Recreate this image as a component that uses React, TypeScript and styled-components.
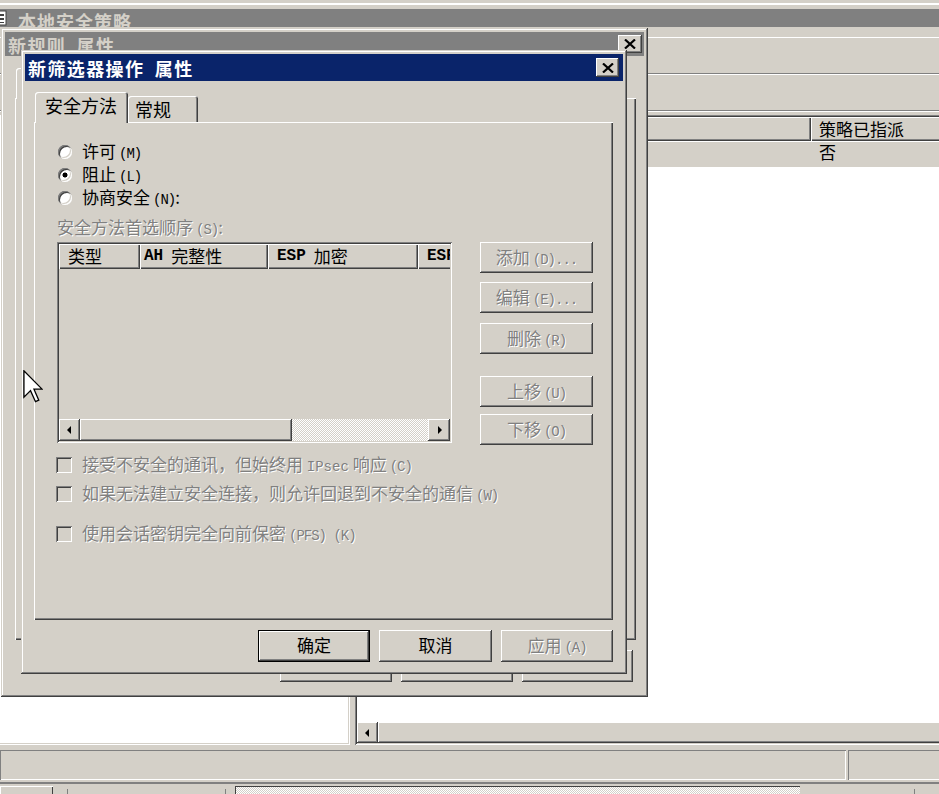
import React from 'react';
import styled, { createGlobalStyle, css } from 'styled-components';

const FACE = '#d4d0c8';
const SHADOW = '#808080';
const DARK = '#404040';
const LIGHT = '#ffffff';
const NAVY = '#0a246a';

const Global = createGlobalStyle`
  html, body { margin: 0; padding: 0; background: ${FACE}; }
  body { width: 939px; height: 794px; overflow: hidden; }
  * { box-sizing: border-box; }
`;

const winFrame = css`
  box-shadow: inset -1px -1px ${DARK}, inset 1px 1px ${FACE}, inset -2px -2px ${SHADOW}, inset 2px 2px ${LIGHT};
`;
const btnRaised = css`
  box-shadow: inset -1px -1px ${DARK}, inset 1px 1px ${LIGHT}, inset -2px -2px ${SHADOW}, inset 2px 2px ${FACE};
`;
const sunken = css`
  box-shadow: inset 1px 1px ${SHADOW}, inset -1px -1px ${LIGHT}, inset 2px 2px ${DARK}, inset -2px -2px ${FACE};
`;
const disabledText = css`
  color: ${SHADOW};
  text-shadow: 1px 1px 0 ${LIGHT};
`;

const Screen = styled.div`
  position: relative;
  width: 939px;
  height: 794px;
  overflow: hidden;
  background: ${FACE};
  display: flex;
  flex-direction: column;
  font-family: "Noto Sans CJK SC", "Noto Sans", sans-serif;
  color: #000;
`;

const FrameTop = styled.div`
  flex: none;
  height: 9px;
  background: linear-gradient(to bottom, ${FACE} 0 3px, ${LIGHT} 3px 5px, ${FACE} 5px);
`;

const MainTitle = styled.div`
  flex: none;
  height: 18px;
  background: ${SHADOW};
  color: ${FACE};
  font-weight: 700;
  font-size: 18px;
  letter-spacing: 1px;
  line-height: 24px;
  display: flex;
  align-items: flex-start;
  white-space: nowrap;
`;

const TitleIcon = styled.svg`
  flex: none;
  margin-left: -9px;
  margin-right: 11px;
  margin-top: 1px;
`;

const MenuStrip = styled.div`
  flex: none;
  height: 10px;
`;

const Band = styled.div`
  flex: none;
  height: 37px;
  border-top: 1px solid ${LIGHT};
  border-bottom: 1px solid ${SHADOW};
`;

const BandGap = styled.div`
  flex: none;
  height: 4px;
  border-top: 1px solid ${LIGHT};
`;

const Content = styled.div`
  flex: none;
  height: 630px;
  display: flex;
`;

const TreePane = styled.div`
  flex: none;
  width: 350px;
  background: ${LIGHT};
  box-shadow: inset -1px -1px ${LIGHT}, inset -2px -2px ${FACE};
`;

const Splitter = styled.div`
  flex: none;
  width: 5px;
`;

const ListPane = styled.div`
  flex: none;
  width: 620px;
  padding: 2px;
  ${sunken};
  display: flex;
  flex-direction: column;
  background: ${LIGHT};
`;

const PaneHead = styled.div`
  flex: none;
  height: 24px;
  display: flex;
  background: ${FACE};
`;

const HeadCell = styled.div<{ $w: number; $pad?: number }>`
  flex: none;
  width: ${(p) => p.$w}px;
  height: 100%;
  padding-left: ${(p) => p.$pad ?? 8}px;
  padding-bottom: 2px;
  box-shadow: inset 1px 1px ${LIGHT}, inset -1px -1px ${DARK}, inset -2px -2px ${SHADOW};
  font-size: 17px;
  display: flex;
  align-items: center;
  white-space: nowrap;
`;

const PaneRow = styled.div`
  flex: none;
  height: 25px;
  margin-top: 1px;
  display: flex;
  background: ${FACE};
`;

const RowCell = styled.div<{ $w: number }>`
  flex: none;
  width: ${(p) => p.$w}px;
  padding-left: 8px;
  font-size: 17px;
  line-height: 20px;
  white-space: nowrap;
`;

const PaneBody = styled.div`
  flex: 1;
`;

const HScroll = styled.div<{ $h: number }>`
  flex: none;
  height: ${(p) => p.$h}px;
  display: flex;
  background-color: ${LIGHT};
  background-image: conic-gradient(${FACE} 25%, ${LIGHT} 0 50%, ${FACE} 0 75%, ${LIGHT} 0);
  background-size: 2px 2px;
`;

const ArrowBtn = styled.div<{ $w: number }>`
  flex: none;
  width: ${(p) => p.$w}px;
  height: 100%;
  background: ${FACE};
  ${btnRaised};
  display: flex;
  align-items: center;
  justify-content: center;
`;

const Tri = styled.span<{ $dir: 'left' | 'right' }>`
  width: 0;
  height: 0;
  border-top: 4px solid transparent;
  border-bottom: 4px solid transparent;
  ${(p) =>
    p.$dir === 'left'
      ? css`border-right: 4px solid #000; margin-left: -2px;`
      : css`border-left: 4px solid #000; margin-left: 2px;`}
`;

const Thumb = styled.div<{ $w?: number }>`
  flex: ${(p) => (p.$w ? 'none' : '1')};
  width: ${(p) => (p.$w ? `${p.$w}px` : 'auto')};
  height: 100%;
  background: ${FACE};
  ${btnRaised};
`;

const StatusBar = styled.div`
  flex: none;
  height: 30px;
  margin-top: 5px;
  display: flex;
  gap: 2px;
`;

const StatusPanel = styled.div<{ $w: number }>`
  flex: none;
  width: ${(p) => p.$w}px;
  height: 100%;
  box-shadow: inset 1px 1px ${SHADOW}, inset -1px -1px ${LIGHT};
`;

const Taskbar = styled.div`
  flex: none;
  height: 12px;
  margin-top: 2px;
  border-top: 2px solid ${SHADOW};
  display: flex;
  align-items: flex-end;
  padding-top: 2px;
`;

const TaskBox = styled.div<{ $w: number; $ml: number }>`
  flex: none;
  width: ${(p) => p.$w}px;
  margin-left: ${(p) => p.$ml}px;
  height: 100%;
  background: ${FACE};
  box-shadow: inset 1px 1px ${LIGHT}, inset -1px 0 ${DARK};
`;

const TaskTick = styled.div<{ $ml: number }>`
  flex: none;
  width: 1px;
  height: 5px;
  margin-left: ${(p) => p.$ml}px;
  background: ${SHADOW};
`;

const TaskField = styled.div<{ $w: number; $ml: number }>`
  flex: none;
  width: ${(p) => p.$w}px;
  margin-left: ${(p) => p.$ml}px;
  height: 100%;
  box-shadow: inset 1px 1px ${DARK};
  background-color: ${LIGHT};
  background-image: conic-gradient(${FACE} 25%, ${LIGHT} 0 50%, ${FACE} 0 75%, ${LIGHT} 0);
  background-size: 2px 2px;
`;

/* ---------- dialog windows ---------- */

const Window = styled.div<{ $x: number; $y: number; $w: number; $h: number; $z: number }>`
  position: absolute;
  z-index: ${(p) => p.$z};
  left: ${(p) => p.$x}px;
  top: ${(p) => p.$y}px;
  width: ${(p) => p.$w}px;
  height: ${(p) => p.$h}px;
  background: ${FACE};
  ${winFrame};
  padding: 4px;
  display: flex;
  flex-direction: column;
`;

const TitleBar = styled.div<{ $active?: boolean; $h: number; $pr: number }>`
  flex: none;
  height: ${(p) => p.$h}px;
  background: ${(p) => (p.$active ? NAVY : SHADOW)};
  color: ${(p) => (p.$active ? LIGHT : FACE)};
  display: flex;
  align-items: center;
  justify-content: space-between;
  padding: 0 ${(p) => p.$pr}px 0 3px;
  font-weight: 700;
  font-size: 18px;
  letter-spacing: 1.4px;
  white-space: nowrap;
  overflow: hidden;
`;

const TitleText = styled.span<{ $dy: number }>`
  line-height: 1;
  position: relative;
  top: ${(p) => p.$dy}px;
`;

const CloseBtn = styled.div<{ $w: number; $h: number }>`
  flex: none;
  width: ${(p) => p.$w}px;
  height: ${(p) => p.$h}px;
  background: ${FACE};
  ${btnRaised};
  display: flex;
  align-items: center;
  justify-content: center;
`;

const TabStrip = styled.div<{ $mt: number; $ml: number; $h: number }>`
  flex: none;
  height: ${(p) => p.$h}px;
  margin-top: ${(p) => p.$mt}px;
  padding-left: ${(p) => p.$ml}px;
  display: flex;
  align-items: flex-end;
`;

const Tab = styled.div<{ $w: number; $active?: boolean; $pl: number }>`
  flex: none;
  width: ${(p) => p.$w}px;
  height: ${(p) => (p.$active ? 31 : 26)}px;
  margin-bottom: ${(p) => (p.$active ? -1 : 0)}px;
  position: relative;
  z-index: ${(p) => (p.$active ? 1 : 0)};
  background: ${FACE};
  border-radius: 3px 3px 0 0;
  box-shadow: inset 1px 1px ${LIGHT}, inset -1px 0 ${DARK}, inset -2px 0 ${SHADOW};
  padding-left: ${(p) => p.$pl}px;
  font-size: 18px;
  line-height: ${(p) => (p.$active ? 27 : 26)}px;
  white-space: nowrap;
`;

const Panel = styled.div<{ $h: number; $ml: number; $mr: number }>`
  flex: none;
  height: ${(p) => p.$h}px;
  margin-left: ${(p) => p.$ml}px;
  margin-right: ${(p) => p.$mr}px;
  box-shadow: inset 1px 1px ${LIGHT}, inset -1px -1px ${DARK}, inset -2px -2px ${SHADOW};
  padding: 17px 0 0 23px;
  display: flex;
  flex-direction: column;
  font-size: 17px;
`;

const ButtonRow = styled.div<{ $pr: number }>`
  flex: none;
  display: flex;
  justify-content: flex-end;
  gap: 9px;
  margin-top: 10px;
  padding-right: ${(p) => p.$pr}px;
`;

const Button = styled.div<{ $w: number; $h: number; $mt?: number; $disabled?: boolean; $default?: boolean }>`
  flex: none;
  width: ${(p) => p.$w}px;
  height: ${(p) => p.$h}px;
  margin-top: ${(p) => p.$mt ?? 0}px;
  padding-bottom: 3px;
  background: ${FACE};
  ${btnRaised};
  ${(p) => p.$default && css`border: 1px solid #000;`}
  display: flex;
  align-items: center;
  justify-content: center;
  font-size: 17px;
  white-space: nowrap;
  ${(p) => p.$disabled && disabledText};
`;

const Label = styled.span`
  white-space: nowrap;
`;

const RadioRow = styled.div`
  flex: none;
  height: 23px;
  display: flex;
  align-items: center;
  white-space: nowrap;
`;

const Radio = styled.span<{ $checked?: boolean }>`
  flex: none;
  width: 14px;
  height: 14px;
  margin-left: 1px;
  margin-right: 10px;
  margin-top: 3px;
  border-radius: 50%;
  background: ${(p) =>
    p.$checked ? `radial-gradient(circle, #000 0 2.2px, ${LIGHT} 2.8px)` : LIGHT};
  box-shadow: inset 1px 1px ${SHADOW}, inset -1px -1px ${LIGHT}, inset 2px 2px ${DARK}, inset -2px -2px ${FACE};
`;

const SectionLabel = styled.div`
  flex: none;
  height: 23px;
  margin-top: 7px;
  line-height: 23px;
  white-space: nowrap;
  ${disabledText};
`;

const MidRow = styled.div`
  flex: none;
  display: flex;
  gap: 28px;
  margin-top: 4px;
`;

const ListBox = styled.div`
  flex: none;
  width: 395px;
  height: 201px;
  padding: 2px;
  ${sunken};
  background: ${FACE};
  display: flex;
  flex-direction: column;
`;

const ListHead = styled.div`
  flex: none;
  height: 25px;
  display: flex;
  overflow-x: clip;
`;

const ListArea = styled.div`
  flex: 1;
`;

const SideButtons = styled.div`
  flex: none;
  width: 113px;
  display: flex;
  flex-direction: column;
`;

const CheckRow = styled.div<{ $mt: number }>`
  flex: none;
  height: 23px;
  margin-top: ${(p) => p.$mt}px;
  display: flex;
  align-items: center;
  white-space: nowrap;
  ${disabledText};
`;

const CheckBox = styled.span`
  flex: none;
  width: 16px;
  height: 16px;
  margin-left: -1px;
  margin-right: 10px;
  margin-top: 3px;
  background: ${FACE};
  box-shadow: inset 1px 1px ${SHADOW}, inset -1px -1px ${LIGHT}, inset 2px 2px ${DARK}, inset -2px -2px ${FACE};
`;

const Acc = styled.span`
  font-family: "Liberation Mono", monospace;
  font-size: 14px;
  margin-left: 3px;
  letter-spacing: -1px;
`;

const Lat = styled.span`
  font-family: "Liberation Mono", monospace;
  font-size: 14px;
`;

const HeadLat = styled.span`
  font-family: "Liberation Mono", monospace;
  font-size: 16px;
  font-weight: 700;
  margin-right: 8px;
`;

const CursorSvg = styled.svg`
  position: absolute;
  z-index: 5;
  left: 23px;
  top: 370px;
`;

const CloseX = () => (
  <svg width="12" height="10" viewBox="0 0 12 10">
    <path d="M1 0.5 L11 9.5 M11 0.5 L1 9.5" stroke="#000" strokeWidth="2.2" fill="none" />
  </svg>
);

export default function App() {
  return (
    <>
      <Global />
      <Screen>
        <FrameTop />
        <MainTitle>
          <TitleIcon width="16" height="16" viewBox="0 0 16 16">
            <rect x="1" y="1" width="14" height="14" fill="#fff" stroke="#404040" />
            <rect x="3" y="4" width="10" height="2" fill="#404040" />
            <rect x="3" y="8" width="10" height="2" fill="#404040" />
            <rect x="3" y="12" width="10" height="1" fill="#404040" />
          </TitleIcon>
          本地安全策略
        </MainTitle>
        <MenuStrip />
        <Band />
        <Band />
        <BandGap />
        <Content>
          <TreePane />
          <Splitter />
          <ListPane>
            <PaneHead>
              <HeadCell $w={454} />
              <HeadCell $w={170}>策略已指派</HeadCell>
            </PaneHead>
            <PaneRow>
              <RowCell $w={454} />
              <RowCell $w={170}>否</RowCell>
            </PaneRow>
            <PaneBody />
            <HScroll $h={21}>
              <ArrowBtn $w={21}>
                <Tri $dir="left" />
              </ArrowBtn>
              <Thumb />
            </HScroll>
          </ListPane>
        </Content>
        <StatusBar>
          <StatusPanel $w={846} />
          <StatusPanel $w={120} />
        </StatusBar>
        <Taskbar>
          <TaskBox $w={53} $ml={0} />
          <TaskTick $ml={14} />
          <TaskTick $ml={157} />
          <TaskField $w={565} $ml={9} />
          <TaskTick $ml={114} />
        </Taskbar>

        {/* 新规则 属性 (inactive, behind) */}
        <Window $x={1} $y={28} $w={647} $h={669} $z={1}>
          <TitleBar $h={24} $pr={2}>
            <TitleText $dy={1}>新规则&ensp;属性</TitleText>
            <CloseBtn $w={24} $h={18}>
              <CloseX />
            </CloseBtn>
          </TitleBar>
          <TabStrip $mt={20} $ml={11} $h={22}>
            <Tab $w={120} $pl={8} $active />
          </TabStrip>
          <Panel $h={542} $ml={10} $mr={8} />
          <ButtonRow $pr={11}>
            <Button $w={112} $h={32} />
            <Button $w={112} $h={32} />
            <Button $w={111} $h={32} />
          </ButtonRow>
        </Window>

        {/* 新筛选器操作 属性 (active) */}
        <Window $x={21} $y={50} $w={606} $h={624} $z={2}>
          <TitleBar $active $h={27} $pr={4}>
            <TitleText $dy={0}>新筛选器操作&ensp;属性</TitleText>
            <CloseBtn $w={23} $h={19}>
              <CloseX />
            </CloseBtn>
          </TitleBar>
          <TabStrip $mt={11} $ml={10} $h={30}>
            <Tab $w={93} $pl={10} $active>安全方法</Tab>
            <Tab $w={70} $pl={7}>常规</Tab>
          </TabStrip>
          <Panel $h={498} $ml={9} $mr={10}>
            <RadioRow>
              <Radio />
              <Label>许可<Acc>(M)</Acc></Label>
            </RadioRow>
            <RadioRow>
              <Radio $checked />
              <Label>阻止<Acc>(L)</Acc></Label>
            </RadioRow>
            <RadioRow>
              <Radio />
              <Label>协商安全<Acc>(N)</Acc>:</Label>
            </RadioRow>
            <SectionLabel>
              安全方法首选顺序<Acc>(S)</Acc>:
            </SectionLabel>
            <MidRow>
              <ListBox>
                <ListHead>
                  <HeadCell $w={81} $pad={9}>类型</HeadCell>
                  <HeadCell $w={128} $pad={4}>
                    <HeadLat>AH</HeadLat>完整性
                  </HeadCell>
                  <HeadCell $w={150} $pad={9}>
                    <HeadLat>ESP</HeadLat>加密
                  </HeadCell>
                  <HeadCell $w={80} $pad={9}>
                    <HeadLat>ESP</HeadLat>
                  </HeadCell>
                </ListHead>
                <ListArea />
                <HScroll $h={22}>
                  <ArrowBtn $w={21}>
                    <Tri $dir="left" />
                  </ArrowBtn>
                  <Thumb $w={212} />
                  <PaneBody />
                  <ArrowBtn $w={22}>
                    <Tri $dir="right" />
                  </ArrowBtn>
                </HScroll>
              </ListBox>
              <SideButtons>
                <Button $w={113} $h={31} $disabled>
                  <Label>添加<Acc>(D)...</Acc></Label>
                </Button>
                <Button $w={113} $h={31} $mt={9} $disabled>
                  <Label>编辑<Acc>(E)...</Acc></Label>
                </Button>
                <Button $w={113} $h={31} $mt={10} $disabled>
                  <Label>删除<Acc>(R)</Acc></Label>
                </Button>
                <Button $w={113} $h={31} $mt={22} $disabled>
                  <Label>上移<Acc>(U)</Acc></Label>
                </Button>
                <Button $w={113} $h={31} $mt={7} $disabled>
                  <Label>下移<Acc>(O)</Acc></Label>
                </Button>
              </SideButtons>
            </MidRow>
            <CheckRow $mt={7}>
              <CheckBox />
              <Label>
                接受不安全的通讯，但始终用 <Lat>IPsec</Lat> 响应<Acc>(C)</Acc>
              </Label>
            </CheckRow>
            <CheckRow $mt={6}>
              <CheckBox />
              <Label>
                如果无法建立安全连接，则允许回退到不安全的通信<Acc>(W)</Acc>
              </Label>
            </CheckRow>
            <CheckRow $mt={17}>
              <CheckBox />
              <Label>
                使用会话密钥完全向前保密<Acc>(PFS) (K)</Acc>
              </Label>
            </CheckRow>
          </Panel>
          <ButtonRow $pr={10}>
            <Button $w={112} $h={32} $default>确定</Button>
            <Button $w={113} $h={32}>取消</Button>
            <Button $w={112} $h={32} $disabled>
              <Label>应用<Acc>(A)</Acc></Label>
            </Button>
          </ButtonRow>
        </Window>

        <CursorSvg width="20" height="33" viewBox="0 0 12 20">
          <path
            d="M0.5 0.5 L0.5 16.5 L4.5 12.5 L7.5 19.2 L9.5 18.3 L6.6 11.6 L11.5 11.6 Z"
            fill="#fff"
            stroke="#000"
            strokeWidth="0.8"
            strokeLinejoin="miter"
          />
        </CursorSvg>
      </Screen>
    </>
  );
}
